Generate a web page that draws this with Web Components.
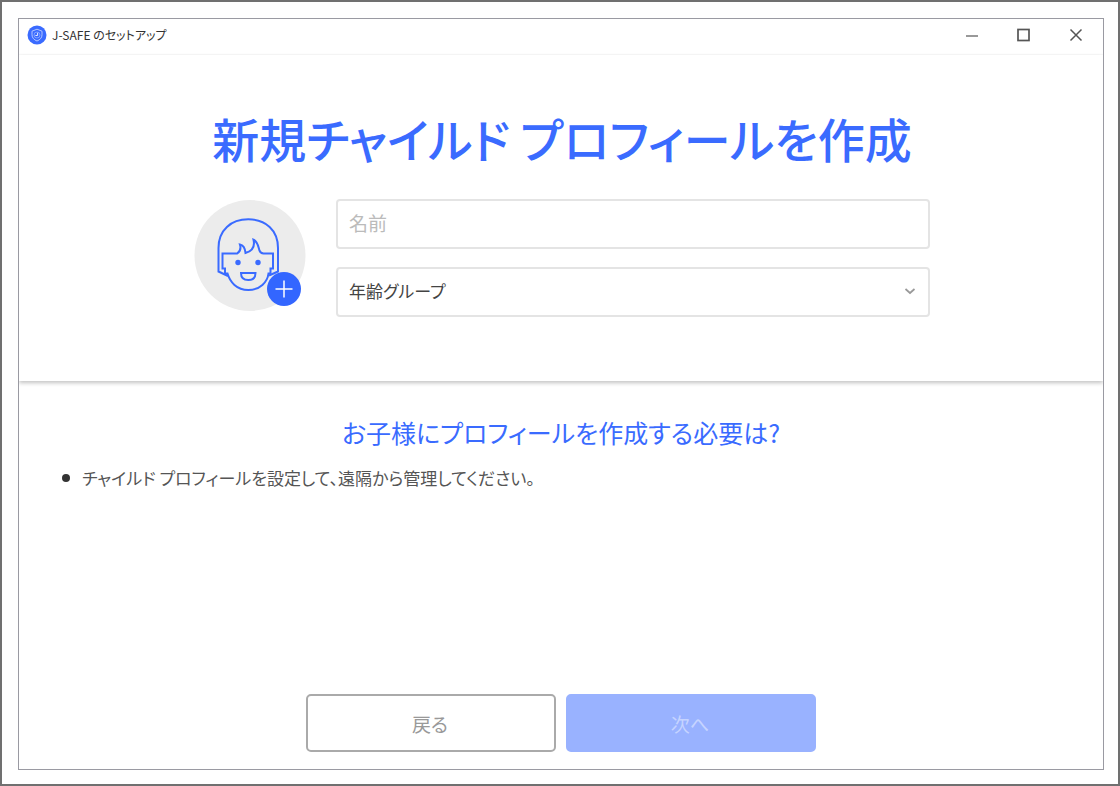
<!DOCTYPE html>
<html lang="ja">
<head>
<meta charset="utf-8">
<meta name="viewport" content="width=device-width, initial-scale=1">
<title>J-SAFE のセットアップ</title>
<style>
  body {
    margin: 0;
    font-family: "Noto Sans CJK JP", "Noto Sans", sans-serif;
    font-feature-settings: "palt";
    color: #555;
    --brand: #3a6bff;
    --line: #e4e4e4;
  }
</style>
</head>
<body>
<setup-window>
  <window-bar slot="bar">J-SAFE のセットアップ</window-bar>
  <profile-form slot="hero">新規チャイルド プロフィールを作成</profile-form>
  <info-panel slot="info">
    <span slot="title">お子様にプロフィールを作成する必要は?</span>
    <span slot="item">チャイルド プロフィールを設定して、遠隔から管理してください。</span>
  </info-panel>
  <action-button slot="actions">戻る</action-button>
  <action-button slot="actions" primary>次へ</action-button>
</setup-window>

<script>
const define = (name, html) => customElements.define(name, class extends HTMLElement {
  constructor() {
    super();
    this.attachShadow({ mode: 'open' }).innerHTML = html;
  }
});

define('setup-window', `
  <style>
    :host { display: flex; box-sizing: border-box; min-height: 100vh; border: 2px solid #707070; padding: 16px 14px 14px 16px; background: #fff; }
    .window { flex: 1; display: flex; flex-direction: column; overflow: hidden; border: 1px solid #9a9aa2; background: #fff; }
    main { flex: 1; display: flex; flex-direction: column; }
    footer { margin-top: auto; display: flex; justify-content: center; gap: 10px; padding: 16px 16px 17px; }
  </style>
  <div class="window">
    <slot name="bar"></slot>
    <main>
      <slot name="hero"></slot>
      <slot name="info"></slot>
      <footer><slot name="actions"></slot></footer>
    </main>
  </div>`);

define('window-bar', `
  <style>
    :host { display: flex; align-items: center; height: 32px; padding: 0 19px 3px 8px; border-bottom: 1px solid #fbfbfb; font-size: 12px; line-height: 20px; color: #333; }
    .logo { width: 20px; height: 20px; margin-right: 5px; }
    .controls { margin-left: auto; display: flex; gap: 36px; }
    button { display: flex; border: 0; padding: 0; background: none; color: #555; }
    button svg { width: 16px; height: 16px; }
  </style>
  <svg class="logo" viewBox="0 0 20 20" fill="none" aria-hidden="true">
    <circle cx="10" cy="10" r="9.5" fill="#3a6bff"/>
    <path d="M10 4.2 5 6.200v3.600c0 3 2 5 5 6.200 3-1.200 5-3.200 5-6.200V6.200Z" stroke="#b5c7ff" stroke-width="1"/>
    <circle cx="10" cy="10" r="3" stroke="#8facff" stroke-width=".8"/>
    <path d="M10.600 7.800v2.700H8.400" stroke="#e4ebff" stroke-width="1"/>
  </svg>
  <span><slot></slot></span>
  <div class="controls">
    <button type="button" aria-label="最小化"><svg viewBox="0 0 16 16"><path d="M2 9h12" stroke="#999" stroke-width="2"/></svg></button>
    <button type="button" aria-label="最大化"><svg viewBox="0 0 16 16"><rect x="2" y="2.500" width="11" height="11" fill="none" stroke="currentColor" stroke-width="1.700"/></svg></button>
    <button type="button" aria-label="閉じる"><svg viewBox="0 0 16 16"><path d="m2.500 2.500 11 11m0-11-11 11" stroke="currentColor" stroke-width="1.500"/></svg></button>
  </div>`);

define('avatar-picker', `
  <style>
    :host { display: block; flex: none; }
    button { display: block; border: 0; padding: 0; background: none; border-radius: 50%; }
    svg { display: block; width: 112px; height: 112px; }
  </style>
  <button type="button" aria-label="写真を追加">
    <svg viewBox="0 0 112 112" fill="none" aria-hidden="true">
      <circle cx="56" cy="56.500" r="55.500" fill="#ececec"/>
      <g stroke="#3a6bff" stroke-width="2">
        <path d="M34 77 24.500 72.500V49C24.500 31 37 20.300 54.300 20.300S84 31 84 49V72.500L75 76.500"/>
        <path d="M28.500 54.500h14.700c3-2 4-5 2.700-9.100 3 .4 5.100 3.100 5.600 8.600 7-2 9.500-7 8-13.300 4.500 2 5 8 6 11 .7 1.800 2 2.800 4 2.800h9.500v15h-2.500v5h-2C73.500 83 66 91 54.300 91S36 83 33.500 74.500h-2.500v-5h-2.500Z"/>
        <path d="M47 74h14.500c0 5-3 7-7.200 7s-7.300-2-7.300-7Z"/>
      </g>
      <circle cx="44" cy="63.500" r="2.700" fill="#3a6bff"/>
      <circle cx="64" cy="63.500" r="2.700" fill="#3a6bff"/>
      <circle cx="90" cy="90" r="17" fill="#3366ff"/>
      <path d="M81.500 90h17M90 81.500v17" stroke="#fff" stroke-width="1.500"/>
    </svg>
  </button>`);

define('profile-form', `
  <style>
    :host { display: block; padding: 53px 22px 64px 24px; box-shadow: 0 2px 4px #0000003d; text-align: center; }
    h1 { margin: 0 0 31px; font-size: 47px; line-height: 60px; font-weight: 500; color: var(--brand); }
    form { display: flex; align-items: flex-start; gap: 30px; max-width: 736px; margin: 0 auto; }
    .fields { flex: 1; display: grid; gap: 18px; }
    .select { position: relative; display: grid; }
    input, select { box-sizing: border-box; width: 100%; height: 50px; margin: 0; border: 2px solid var(--line); border-radius: 4px; padding: 0 11px 4px; background: #fff; color: #444; font: inherit; font-feature-settings: inherit; appearance: none; outline: 0; }
    input { font-size: 19px; }
    select { font-size: 17px; }
    input::placeholder { color: #bbb; opacity: 1; }
    .chevron { position: absolute; right: 14px; top: 18px; width: 12px; height: 12px; pointer-events: none; }
  </style>
  <h1><slot></slot></h1>
  <form>
    <avatar-picker></avatar-picker>
    <div class="fields">
      <input type="text" placeholder="名前" aria-label="名前">
      <div class="select">
        <select aria-label="年齢グループ"><option>年齢グループ</option></select>
        <svg class="chevron" viewBox="0 0 12 12" fill="none"><path d="m1.500 4 4.500 4 4.500-4" stroke="#999" stroke-width="1.700"/></svg>
      </div>
    </div>
  </form>`);

define('info-panel', `
  <style>
    :host { display: block; padding: 31px 40px 24px; }
    h2 { margin: 0 0 12px; font-size: 25px; line-height: 40px; font-weight: 400; color: var(--brand); text-align: center; }
    ul { margin: 0; padding: 0; list-style: none; font-size: 17px; line-height: 28px; }
    li { display: flex; align-items: center; gap: 12px; }
    li::before { content: ""; width: 8px; height: 8px; margin-left: 3px; border-radius: 50%; background: #333; }
  </style>
  <h2><slot name="title"></slot></h2>
  <ul><li><slot name="item"></slot></li></ul>`);

define('action-button', `
  <style>
    :host { display: block; flex: 0 1 250px; }
    button { display: block; width: 100%; height: 58px; border: 2px solid #aaa; border-radius: 5px; padding: 0 2px 0 0; background: #fff; color: #999; font: inherit; font-size: 19px; font-feature-settings: inherit; }
    :host([primary]) button { border-color: #99b2ff; background: #99b2ff; color: #c6d4ff; }
  </style>
  <button type="button"><slot></slot></button>`);
</script>
</body>
</html>
